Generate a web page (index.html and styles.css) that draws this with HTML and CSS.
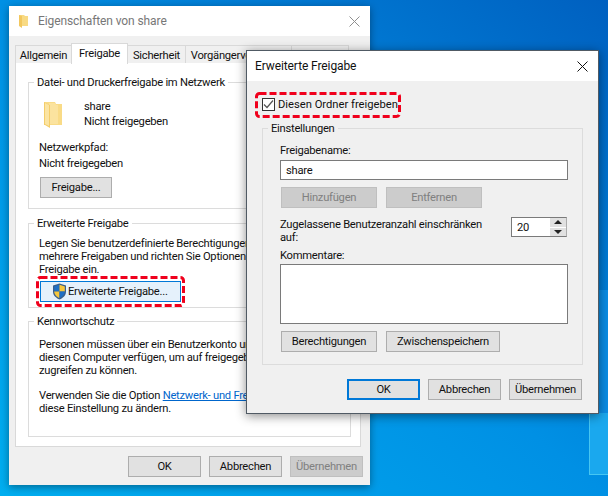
FILE: index.html
```html
<!DOCTYPE html>
<html lang="de">
<head>
    <meta charset="UTF-8">
    <title>Eigenschaften von share</title>
    <link rel="stylesheet" href="styles.css">
</head>
<body>
    <div class="desktop">
        <div class="pane pane-one"></div>
        <div class="pane pane-two"></div>
    </div>

    <!-- Properties window -->
    <div class="window props">
        <div class="titlebar">
            <svg class="title-folder" width="9" height="13" viewBox="0 0 9 13">
                <path d="M0 0h5l1 1h3v10H0z" fill="#f8da84"/>
                <path d="M0 0l3 1v12l-3-2z" fill="#f2c75e"/>
            </svg>
            <span class="title-text muted">Eigenschaften von share</span>
            <svg class="close" width="11" height="11" viewBox="0 0 11 11">
                <path d="M.5.5l10 10M10.500.5l-10 10" stroke="#8f8f8f" fill="none"/>
            </svg>
        </div>
        <div class="props-body">
            <div class="tabs">
                <div class="tab tab-a">Allgemein</div>
                <div class="tab tab-b active">Freigabe</div>
                <div class="tab tab-c">Sicherheit</div>
                <div class="tab tab-d">Vorgängerversionen</div>
                <div class="tab tab-e">Anpassen</div>
            </div>
            <div class="tab-panel">
                <fieldset class="group group-net">
                    <legend>Datei- und Druckerfreigabe im Netzwerk</legend>
                    <div class="group-inner">
                        <div class="share-row">
                            <svg class="folder" width="18" height="26" viewBox="0 0 18 26">
                                <path d="M0 0h11l1 2h6v21H0z" fill="#f9db87"/>
                                <path d="M5 1h6l1 2h2v19H5z" fill="#fbe39f"/>
                                <path d="M0 0l6 3v23l-5-3H0z" fill="#f4cd6a"/>
                                <path d="M1 1l4 2v21l-4-2z" fill="#fbe4a2"/>
                            </svg>
                            <div class="lines">
                                <div>share</div>
                                <div>Nicht freigegeben</div>
                            </div>
                        </div>
                        <div class="net-path">Netzwerkpfad:</div>
                        <div class="net-value">Nicht freigegeben</div>
                        <button class="btn btn-share">Freigabe...</button>
                    </div>
                </fieldset>
                <fieldset class="group group-adv">
                    <legend>Erweiterte Freigabe</legend>
                    <div class="group-inner">
                        <p class="copy">Legen Sie benutzerdefinierte Berechtigungen fest, erstellen Sie<br>mehrere Freigaben und richten Sie Optionen für die erweiterte<br>Freigabe ein.</p>
                        <button class="btn btn-adv">
                            <svg width="15" height="17" viewBox="0 0 15 17">
                                <path d="M7.500.5L14 2.500v6c0 4-3 6.500-6.500 8C4 15 1 12.500 1 8.500v-6z" fill="#3b5f8a"/>
                                <path d="M7.500 1.800V8.500H2.200V3.400z" fill="#1f6fc4"/>
                                <path d="M7.500 1.800l5.300 1.600v5.100H7.500z" fill="#f6c73c"/>
                                <path d="M2.200 8.500h5.300v6.600C5 14 2.400 12 2.200 8.500z" fill="#f6c73c"/>
                                <path d="M7.500 8.500h5.300c-.2 3.500-2.800 5.500-5.300 6.600z" fill="#1f6fc4"/>
                            </svg>
                            <span>Erweiterte Freigabe...</span>
                        </button>
                    </div>
                </fieldset>
                <fieldset class="group group-pass">
                    <legend>Kennwortschutz</legend>
                    <div class="group-inner">
                        <p class="copy">Personen müssen über ein Benutzerkonto und ein Kennwort für<br>diesen Computer verfügen, um auf freigegebene Ordner<br>zugreifen zu können.</p>
                        <p class="copy copy-link">Verwenden Sie die Option <a href="#">Netzwerk- und Freigabecenter</a>, um<br>diese Einstellung zu ändern.</p>
                    </div>
                </fieldset>
            </div>
            <div class="actions">
                <button class="btn">OK</button>
                <button class="btn">Abbrechen</button>
                <button class="btn disabled">Übernehmen</button>
            </div>
        </div>
        <svg class="dash dash-adv" width="149" height="31">
            <rect x="1.500" y="1.500" width="146" height="28" rx="3"/>
        </svg>
    </div>

    <!-- Advanced sharing dialog -->
    <div class="window adv">
        <div class="titlebar">
            <span class="title-text">Erweiterte Freigabe</span>
            <svg class="close" width="11" height="11" viewBox="0 0 11 11">
                <path d="M.5.5l10 10M10.500.5l-10 10" stroke="#111" fill="none"/>
            </svg>
        </div>
        <div class="adv-body">
            <div class="check-row">
                <span class="checkbox">
                    <svg width="11" height="11" viewBox="0 0 11 11">
                        <path d="M1 5.500l3 3 6-7" stroke="#555" stroke-width="1.200" fill="none"/>
                    </svg>
                </span>
                <span class="check-text">Diesen Ordner freigeben</span>
            </div>
            <fieldset class="group group-settings">
                <legend>Einstellungen</legend>
                <div class="group-inner">
                    <label class="field-label">Freigabename:</label>
                    <div class="input name-input">share</div>
                    <div class="btn-row">
                        <button class="btn wide disabled">Hinzufügen</button>
                        <button class="btn wide disabled">Entfernen</button>
                    </div>
                    <div class="limit-row">
                        <div class="limit-text">Zugelassene Benutzeranzahl einschränken<br>auf:</div>
                        <div class="spin">
                            <span class="spin-value">20</span>
                            <span class="spin-arrows">
                                <span class="arrow"><i class="up"></i></span>
                                <span class="arrow"><i class="down"></i></span>
                            </span>
                        </div>
                    </div>
                    <label class="field-label comment-label">Kommentare:</label>
                    <div class="input comment-input"></div>
                    <div class="btn-row">
                        <button class="btn wide">Berechtigungen</button>
                        <button class="btn cache">Zwischenspeichern</button>
                    </div>
                </div>
            </fieldset>
            <div class="actions">
                <button class="btn primary">OK</button>
                <button class="btn">Abbrechen</button>
                <button class="btn">Übernehmen</button>
            </div>
        </div>
        <svg class="dash dash-check" width="146" height="26">
            <rect x="1.500" y="1.500" width="143" height="23" rx="3"/>
        </svg>
    </div>
</body>
</html>
```

FILE: styles.css
```css
* {
    box-sizing: border-box;
}

body {
    margin: 0;
    width: 608px;
    height: 496px;
    overflow: hidden;
    position: relative;
    font-family: 'Roboto', sans-serif;
    font-size: 11.2px;
    letter-spacing: -0.25px;
    line-height: 13px;
    color: #111;
}

/* desktop wallpaper */
.desktop {
    position: absolute;
    inset: 0;
    overflow: hidden;
    background: linear-gradient(to bottom left, #0060c0 0%, #0090e4 50%, #00aef0 100%);
}

.pane {
    position: absolute;
}

.pane-one {
    left: 589px;
    top: 413px;
    width: 30px;
    height: 62px;
    background: #1aa8ee;
    border-left: 1px solid #46c6f2;
    border-bottom: 1px solid #46c6f2;
}

.pane-two {
    left: 589px;
    top: 290px;
    width: 30px;
    height: 123px;
    background: #0a8ce4;
}

.window {
    position: absolute;
    background: #f0f0f0;
}

.props {
    left: 9px;
    top: 6px;
    width: 361px;
    height: 479px;
    z-index: 1;
    box-shadow: 0 2px 8px rgba(0, 0, 0, 0.4);
}

.adv {
    left: 246px;
    top: 50px;
    width: 353px;
    height: 364px;
    z-index: 2;
    border: 1px solid #505a64;
    box-shadow: 0 2px 10px rgba(0, 0, 0, 0.45);
}

.titlebar {
    height: 30px;
    background: #fff;
    display: flex;
    align-items: center;
    font-size: 12px;
    letter-spacing: -0.1px;
}

.title-folder {
    margin-right: 10px;
}

.title-text {
    flex: 1;
}

.muted {
    color: #777;
}

.props .titlebar {
    padding: 0 10px;
}

.adv .titlebar {
    padding: 0 10px 0 8px;
}

.props-body {
    padding: 7px 7px 0 6px;
}

/* tabs */
.tabs {
    display: flex;
    height: 20px;
    align-items: flex-end;
    position: relative;
    z-index: 1;
}

.tab {
    height: 18px;
    background: #f0f0f0;
    border: 1px solid #d9d9d9;
    border-bottom: 0;
    margin-right: -1px;
    padding-top: 3px;
    text-align: center;
    white-space: nowrap;
    overflow: hidden;
}

.tab.active {
    height: 21px;
    margin-bottom: -1px;
    background: #fff;
    padding-top: 3px;
    z-index: 1;
}

.tab-a { width: 57px; }
.tab-b { width: 57px; }
.tab-c { width: 59px; }
.tab-d { width: 107px; }
.tab-e { width: 58px; }

.tab-panel {
    width: 346px;
    height: 385px;
    margin-top: -1px;
    background: #fff;
    border: 1px solid #d9d9d9;
    padding: 11px 9px 0 12px;
}

/* group boxes */
.group {
    margin: 0;
    border: 1px solid #dcdcdc;
    padding: 0;
    min-width: 0;
}

.group legend {
    margin-left: 5px;
    padding: 2px 3px 0;
    line-height: 14px;
}

.group-inner {
    padding-left: 10px;
}

.group-net {
    height: 135px;
}

.group-net .group-inner {
    padding-top: 10px;
}

.group-adv {
    height: 93px;
    margin-top: 6px;
}

.group-adv .group-inner {
    padding-top: 6px;
}

.group-pass {
    height: 124px;
    margin-top: 5px;
}

.group-pass .group-inner {
    padding-top: 9px;
}

.share-row {
    display: flex;
    padding-left: 5px;
}

.folder {
    margin: 2px 22px 0 0;
}

.lines div {
    height: 15px;
}

.net-path {
    margin-top: 11px;
    height: 16px;
}

.net-value {
    height: 16px;
}

.copy {
    margin: 0;
    white-space: nowrap;
}

.copy-link {
    margin-top: 12px;
}

.copy a {
    color: #0066cc;
}

/* buttons */
.btn {
    width: 73px;
    height: 21px;
    padding: 0;
    background: #e1e1e1;
    border: 1px solid #adadad;
    font: inherit;
    letter-spacing: inherit;
    color: #111;
    white-space: nowrap;
}

.btn.disabled {
    background: #cccccc;
    border-color: #bfbfbf;
    color: #808080;
}

.btn.primary {
    border: 2px solid #0078d7;
}

.btn-share {
    display: block;
    width: 72px;
    margin: 4px 0 0 1px;
}

.btn-adv {
    width: 141px;
    margin: 5px 0 0 1px;
    background: #e5f1fb;
    border-color: #0078d7;
    display: flex;
    align-items: center;
    padding-left: 11px;
    gap: 1px;
}

.actions {
    display: flex;
    justify-content: flex-end;
    gap: 8px;
}

.props .actions {
    margin-top: 9px;
}

.adv .actions {
    margin: 14px 1px 0 0;
}

/* red highlight marks */
.dash {
    position: absolute;
    pointer-events: none;
}

.dash rect {
    fill: none;
    stroke: #f0001c;
    stroke-width: 3;
    stroke-dasharray: 7 3;
}

.dash-adv {
    left: 27px;
    top: 270px;
}

.dash-check {
    left: 8px;
    top: 41px;
}

/* advanced dialog */
.adv-body {
    padding: 0 15px;
}

.check-row {
    display: flex;
    align-items: center;
    gap: 3px;
    height: 13px;
    margin-top: 17px;
}

.check-text {
    letter-spacing: 0;
}

.checkbox {
    width: 13px;
    height: 13px;
    border: 1px solid #333;
    background: #fff;
    display: flex;
    align-items: center;
    justify-content: center;
}

.group-settings {
    width: 321px;
    height: 245px;
    margin-top: 9px;
}

.group-settings .group-inner {
    padding: 8px 0 0 17px;
}

.field-label {
    display: block;
    height: 15px;
}

.input {
    width: 288px;
    background: #fff;
    border: 1px solid #7a7a7a;
}

.name-input {
    height: 20px;
    margin-top: 1px;
    padding: 3px 5px;
}

.comment-input {
    height: 60px;
}

.btn-row {
    display: flex;
    gap: 9px;
    margin: 7px 0 0 1px;
}

.btn.wide {
    width: 96px;
}

.btn.cache {
    width: 114px;
}

.limit-row {
    display: flex;
    margin-top: 9px;
    height: 32px;
}

.limit-text {
    width: 231px;
    padding-top: 1px;
}

.spin {
    width: 56px;
    height: 20px;
    background: #fff;
    border: 1px solid #7a7a7a;
    border-right-color: #adadad;
    display: flex;
    justify-content: space-between;
}

.spin-value {
    padding: 3px 0 0 5px;
}

.spin-arrows {
    width: 16px;
    display: flex;
    flex-direction: column;
    gap: 1px;
}

.arrow {
    flex: 1;
    background: #e1e1e1;
    display: flex;
    align-items: center;
    justify-content: center;
}

.arrow i {
    width: 0;
    height: 0;
    border-left: 4px solid transparent;
    border-right: 4px solid transparent;
}

.arrow .up {
    border-bottom: 4px solid #222;
}

.arrow .down {
    border-top: 4px solid #222;
}

.comment-label {
    height: 15px;
}
```
